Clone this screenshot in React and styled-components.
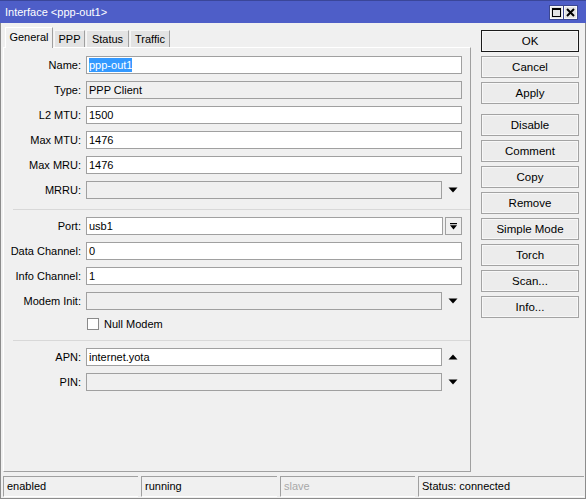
import styled, { createGlobalStyle } from "styled-components"

const GlobalStyle = createGlobalStyle`
  html, body {
    margin: 0;
    padding: 0;
    background: #f0f0f0;
  }
  body {
    font-family: "Liberation Sans", Arial, sans-serif;
    font-size: 11px;
    color: #000;
  }
`

const TABS = [
  { label: "General", width: 48 },
  { label: "PPP", width: 31 },
  { label: "Status", width: 43 },
  { label: "Traffic", width: 40 },
]

const BUTTONS = [
  { label: "OK", primary: true },
  { label: "Cancel" },
  { label: "Apply" },
  { label: "Disable", spaced: true },
  { label: "Comment" },
  { label: "Copy" },
  { label: "Remove" },
  { label: "Simple Mode" },
  { label: "Torch" },
  { label: "Scan..." },
  { label: "Info..." },
]

const STATUS = [
  { text: "enabled", width: 135 },
  { text: "running", width: 136 },
  { text: "slave", width: 135, muted: true },
  { text: "Status: connected", width: 166 },
]

function Arrow({ up }) {
  return (
    <ArrowSlot>
      <svg width="10" height="6" viewBox="0 0 10 6">
        {up ? (
          <polygon points="0.5,5.5 9.5,5.5 5,0.5" fill="#000" />
        ) : (
          <polygon points="0.5,0.5 9.5,0.5 5,5.5" fill="#000" />
        )}
      </svg>
    </ArrowSlot>
  )
}

function Field({ label, value, disabled, arrow, dropdown, selected }) {
  return (
    <Row>
      <Label>{label}:</Label>
      <FieldBox>
        <TextBox $disabled={disabled}>
          {selected ? <Selection>{value}</Selection> : value}
        </TextBox>
        {arrow && <Arrow up={arrow === "up"} />}
        {dropdown && (
          <DropButton>
            <svg width="7" height="7" viewBox="0 0 7 7">
              <rect x="0" y="0" width="7" height="1.2" fill="#000" />
              <polygon points="0,2.2 7,2.2 3.5,6.5" fill="#000" />
            </svg>
          </DropButton>
        )}
      </FieldBox>
    </Row>
  )
}

export default function App() {
  return (
    <>
      <GlobalStyle />
      <Window>
        <TitleBar>
          <span>Interface &lt;ppp-out1&gt;</span>
          <TitleButtons>
            <TitleButton>
              <svg width="11" height="11" viewBox="0 0 11 11">
                <rect x="1.5" y="1.5" width="8" height="8" fill="none" stroke="#000" strokeWidth="1" />
                <rect x="1" y="1" width="9" height="2" fill="#000" />
              </svg>
            </TitleButton>
            <TitleButton>
              <svg width="11" height="11" viewBox="0 0 11 11">
                <path d="M2 2 L9 9 M9 2 L2 9" stroke="#000" strokeWidth="2" />
              </svg>
            </TitleButton>
          </TitleButtons>
        </TitleBar>
        <Body>
          <Main>
            <TabArea>
              <TabRow>
                {TABS.map((t, i) => (
                  <Tab key={t.label} $active={i === 0} $width={t.width}>
                    {t.label}
                  </Tab>
                ))}
              </TabRow>
              <Panel>
                <Group>
                  <Field label="Name" value="ppp-out1" selected />
                  <Field label="Type" value="PPP Client" disabled />
                  <Field label="L2 MTU" value="1500" />
                  <Field label="Max MTU" value="1476" />
                  <Field label="Max MRU" value="1476" />
                  <Field label="MRRU" value="" disabled arrow="down" />
                </Group>
                <Separator />
                <Group>
                  <Field label="Port" value="usb1" dropdown />
                  <Field label="Data Channel" value="0" />
                  <Field label="Info Channel" value="1" />
                  <Field label="Modem Init" value="" disabled arrow="down" />
                </Group>
                <CheckRow>
                  <CheckBox />
                  <span>Null Modem</span>
                </CheckRow>
                <Separator $tight />
                <Group>
                  <Field label="APN" value="internet.yota" arrow="up" />
                  <Field label="PIN" value="" disabled arrow="down" />
                </Group>
              </Panel>
            </TabArea>
            <ButtonColumn>
              {BUTTONS.map((b) => (
                <Button key={b.label} $primary={b.primary} $spaced={b.spaced}>
                  {b.label}
                </Button>
              ))}
            </ButtonColumn>
          </Main>
          <StatusBar>
            {STATUS.map((s) => (
              <StatusCell key={s.text} $width={s.width} $muted={s.muted}>
                {s.text}
              </StatusCell>
            ))}
          </StatusBar>
        </Body>
      </Window>
    </>
  )
}

const Window = styled.div`
  width: 586px;
  height: 499px;
  display: flex;
  flex-direction: column;
  background: #f0f0f0;
  overflow: hidden;
`

const TitleBar = styled.div`
  height: 23px;
  flex: none;
  box-sizing: border-box;
  background: #4e5ec8;
  border-top: 1px solid #3a4699;
  color: #fff;
  display: flex;
  align-items: center;
  justify-content: space-between;
  padding: 0 9px 0 5px;
`

const TitleButtons = styled.div`
  display: flex;
  gap: 1px;
`

const TitleButton = styled.div`
  width: 13px;
  height: 13px;
  box-sizing: border-box;
  background: #e4e4e4;
  border: 1px solid #f8f8f8;
  outline: 1px solid #3c4790;
  display: flex;
  align-items: center;
  justify-content: center;
`

const Body = styled.div`
  flex: 1;
  display: flex;
  flex-direction: column;
  border-left: 1px solid #8c8c8c;
  border-right: 1px solid #8c8c8c;
  border-bottom: 1px solid #8c8c8c;
`

const Main = styled.div`
  display: flex;
  padding: 4px 0 0 2px;
`

const TabArea = styled.div`
  width: 468px;
  display: flex;
  flex-direction: column;
`

const TabRow = styled.div`
  height: 20px;
  display: flex;
  align-items: flex-end;
  padding-left: 2px;
`

const Tab = styled.div`
  box-sizing: border-box;
  width: ${(p) => p.$width}px;
  height: ${(p) => (p.$active ? "21px" : "17px")};
  margin-bottom: ${(p) => (p.$active ? "-1px" : "0")};
  padding-top: ${(p) => (p.$active ? "3px" : "2px")};
  margin-right: ${(p) => (p.$active ? "1px" : "1px")};
  text-align: center;
  background: ${(p) => (p.$active ? "#f0f0f0" : "#e3e3e3")};
  border-top: 1px solid ${(p) => (p.$active ? "#ffffff" : "#f6f6f6")};
  border-left: 1px solid ${(p) => (p.$active ? "#ffffff" : "#f6f6f6")};
  border-right: 1px solid #a0a0a0;
  position: relative;
  z-index: ${(p) => (p.$active ? 1 : 0)};
  white-space: nowrap;
`

const Panel = styled.div`
  height: 425px;
  box-sizing: border-box;
  border-top: 1px solid #ffffff;
  border-left: 1px solid #ffffff;
  border-right: 1px solid #a0a0a0;
  border-bottom: 1px solid #a0a0a0;
  padding-top: 8px;
`

const Group = styled.div`
  display: flex;
  flex-direction: column;
  gap: 7px;
`

const Row = styled.div`
  display: grid;
  grid-template-columns: 77px 376px;
  column-gap: 5px;
  align-items: center;
  height: 18px;
`

const Label = styled.div`
  text-align: right;
  white-space: nowrap;
`

const FieldBox = styled.div`
  display: flex;
  height: 18px;
`

const TextBox = styled.div`
  flex: 1;
  box-sizing: border-box;
  height: 18px;
  border: 1px solid #a0a0a0;
  background: ${(p) => (p.$disabled ? "#f0f0f0" : "#ffffff")};
  padding: 1px 2px 0 2px;
  line-height: 15px;
  white-space: nowrap;
  overflow: hidden;
`

const Selection = styled.span`
  background: #3399ff;
  color: #fff;
  padding: 1px 0;
`

const ArrowSlot = styled.div`
  width: 19px;
  display: flex;
  align-items: center;
  justify-content: center;
  padding-left: 1px;
`

const DropButton = styled.div`
  width: 17px;
  margin-left: 2px;
  box-sizing: border-box;
  border: 1px solid #a0a0a0;
  background: #f0f0f0;
  display: flex;
  align-items: center;
  justify-content: center;
`

const Separator = styled.div`
  margin: ${(p) => (p.$tight ? "9px" : "10px")} 0 7px 9px;
  border-top: 1px solid #d8d8d8;
`

const CheckRow = styled.div`
  display: flex;
  align-items: center;
  gap: 5px;
  height: 14px;
  margin-top: 7px;
  padding-left: 83px;
`

const CheckBox = styled.div`
  width: 12px;
  height: 12px;
  box-sizing: border-box;
  border: 1px solid #8a8a8a;
  background: #fff;
`

const ButtonColumn = styled.div`
  width: 98px;
  margin: 3px 0 0 10px;
  display: flex;
  flex-direction: column;
  gap: 4px;
`

const Button = styled.div`
  height: 22px;
  box-sizing: border-box;
  margin-top: ${(p) => (p.$spaced ? "6px" : "0")};
  border: 1px solid ${(p) => (p.$primary ? "#1a1a1a" : "#a3a3a3")};
  box-shadow: inset 0 0 0 1px #f7f7f7;
  background: #ececec;
  display: flex;
  align-items: center;
  justify-content: center;
  font-size: 11.5px;
`

const StatusBar = styled.div`
  margin-top: auto;
  display: flex;
  gap: 3px;
  padding: 0 0 1px 2px;
  height: 22px;
  box-sizing: border-box;
`

const StatusCell = styled.div`
  width: ${(p) => p.$width}px;
  box-sizing: border-box;
  border-top: 1px solid #a0a0a0;
  border-left: 1px solid #a0a0a0;
  border-bottom: 1px solid #ffffff;
  padding: 3px 0 0 3px;
  color: ${(p) => (p.$muted ? "#a8a8a8" : "#000")};
  white-space: nowrap;
`
